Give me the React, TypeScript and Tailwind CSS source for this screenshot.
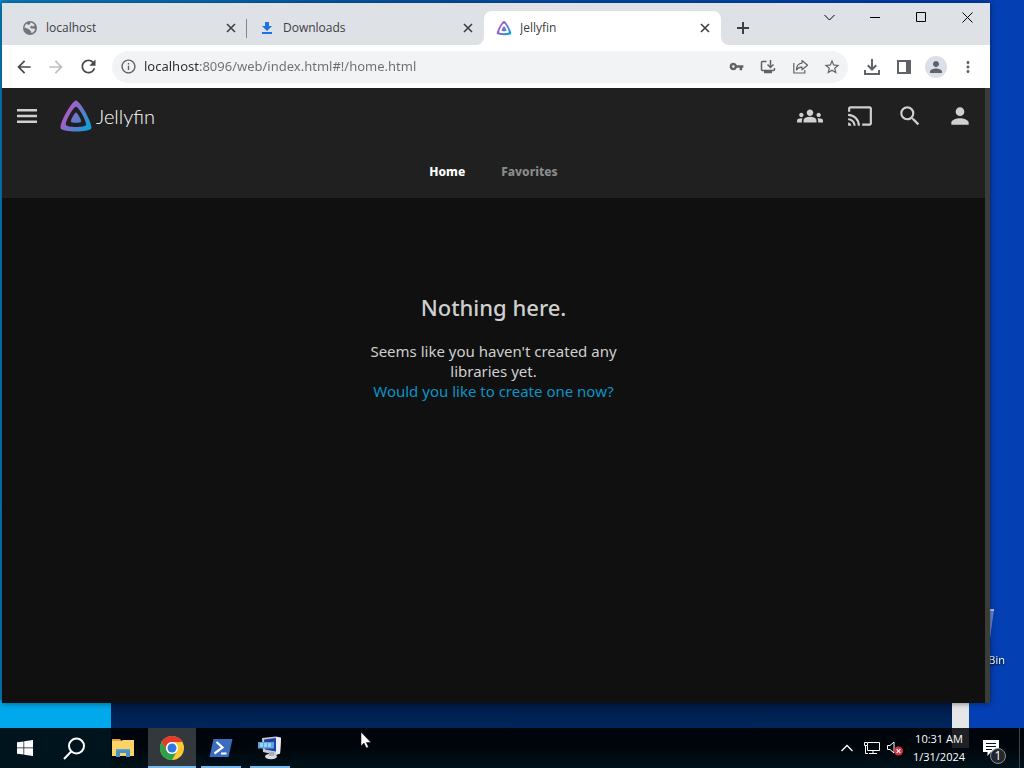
import React, { useState } from "react";
import {
  MdArrowBack,
  MdArrowForward,
  MdCast,
  MdGroups,
  MdInfoOutline,
  MdMoreVert,
  MdPerson,
  MdRefresh,
  MdSearch,
  MdStarBorder,
  MdVpnKey,
} from "react-icons/md";

interface BrowserTab {
  id: string;
  title: string;
  icon: React.ReactNode;
}

interface IconButtonProps {
  label: string;
  className?: string;
  children: React.ReactNode;
}

const IconButton: React.FC<IconButtonProps> = ({
  label,
  className = "w-8 h-8",
  children,
}) => (
  <button
    type="button"
    aria-label={label}
    className={`flex shrink-0 items-center justify-center ${className}`}
  >
    {children}
  </button>
);

/**
 * Jellyfin triangle, used in the tab and in the page header
 */
const JellyfinMark: React.FC<{ id: string; size: number }> = ({ id, size }) => (
  <svg width={size} height={size} viewBox="0 0 512 512" aria-hidden="true">
    <defs>
      <linearGradient
        id={id}
        gradientUnits="userSpaceOnUse"
        x1="110"
        y1="213"
        x2="497"
        y2="437"
      >
        <stop offset="0" stopColor="#aa5cc3" />
        <stop offset="1" stopColor="#00a4dc" />
      </linearGradient>
    </defs>
    <path
      fill={`url(#${id})`}
      d="M256,201.6c-20.4,0-86.2,119.3-76.2,139.4s142.5,19.9,152.4,0S276.5,201.6,256,201.6z"
    />
    <path
      fill={`url(#${id})`}
      fillRule="evenodd"
      d="M256,23.3c-61.6,0-259.8,359.4-229.6,420.1s429.2,60,459.1,0S317.6,23.3,256,23.3z M406.5,390.8c-19.6,39.3-281.1,39.8-300.9,0s110.1-275.3,150.4-275.3S426.1,351.4,406.5,390.8z"
    />
  </svg>
);

const GlobeMark = () => (
  <svg width="14" height="14" viewBox="0 0 14 14" aria-hidden="true">
    <circle cx="7" cy="7" r="7" fill="#737679" />
    <path
      d="M7.500 1.500c1.800.3 3.300 1.300 4.200 2.800L10 5.500 8.300 4.700 6.800 6.300l1.700 1.200 3.700.3c-.3 2-1.700 3.700-3.700 4.300l-.7-2.200L5.500 8 1.500 6.600C1.700 5 2.500 3.600 3.800 2.600L5 4l2-.8z"
      fill="#dee1e6"
    />
  </svg>
);

const DownloadsMark = () => (
  <svg width="16" height="16" viewBox="0 0 16 16" fill="#1a73e8" aria-hidden="true">
    <path d="M6 2h4v4h3l-5 5-5-5h3z" />
    <path d="M3 12h10v2H3z" />
  </svg>
);

const tabs: BrowserTab[] = [
  { id: "localhost", title: "localhost", icon: <GlobeMark /> },
  { id: "downloads", title: "Downloads", icon: <DownloadsMark /> },
  {
    id: "jellyfin",
    title: "Jellyfin",
    icon: <JellyfinMark id="mark-tab" size={16} />,
  },
];

const TabStrip = () => {
  const [active, setActive] = useState("jellyfin");

  return (
    <div className="flex h-[42px] shrink-0 bg-[#dee1e6] pl-2 text-[#3c4043]">
      <div className="flex min-w-0 flex-1 items-end">
        {tabs.map((tab, index) => {
          const isActive = tab.id === active;
          return (
            <div
              key={tab.id}
              className={`relative flex h-[34px] w-[237px] min-w-0 items-center gap-2 pl-3 pr-2 ${
                isActive ? "rounded-t-lg bg-white" : ""
              }`}
            >
              <button
                type="button"
                onClick={() => setActive(tab.id)}
                className="flex min-w-0 flex-1 items-center gap-2 text-left text-xs"
              >
                <span className="flex w-4 shrink-0 justify-center">{tab.icon}</span>
                <span className="truncate">{tab.title}</span>
              </button>
              <IconButton label={`Close ${tab.title}`} className="size-4">
                <svg width="10" height="10" viewBox="0 0 10 10" stroke="currentColor" strokeWidth="1.600">
                  <path d="M1 1l8 8M9 1L1 9" />
                </svg>
              </IconButton>
              {index === 0 && !isActive && (
                <span className="absolute right-0 top-2 h-[19px] w-px bg-[#80868b]" />
              )}
              {isActive && (
                <>
                  <svg
                    className="absolute -left-2 bottom-0"
                    width="8"
                    height="8"
                    viewBox="0 0 8 8"
                  >
                    <path d="M8 0v8H0a8 8 0 0 0 8-8z" fill="#fff" />
                  </svg>
                  <svg
                    className="absolute -right-2 bottom-0"
                    width="8"
                    height="8"
                    viewBox="0 0 8 8"
                  >
                    <path d="M0 0v8h8a8 8 0 0 1-8-8z" fill="#fff" />
                  </svg>
                </>
              )}
            </div>
          );
        })}
        <IconButton label="New tab" className="ml-2 h-[34px] w-7">
          <svg width="12" height="12" viewBox="0 0 12 12" stroke="currentColor" strokeWidth="2">
            <path d="M6 0v12M0 6h12" />
          </svg>
        </IconButton>
      </div>

      {/* Window controls */}
      <div className="flex shrink-0 text-black">
        <IconButton label="Search tabs" className="h-7 w-[46px]">
          <svg width="11" height="11" viewBox="0 0 11 11" fill="none" stroke="currentColor">
            <path d="M0.500 3l5 5 5-5" />
          </svg>
        </IconButton>
        <IconButton label="Minimize" className="h-7 w-[46px]">
          <svg width="10" height="10" viewBox="0 0 10 10" stroke="currentColor">
            <path d="M0 5.500h10" />
          </svg>
        </IconButton>
        <IconButton label="Maximize" className="h-7 w-[46px]">
          <svg width="10" height="10" viewBox="0 0 10 10" fill="none" stroke="currentColor">
            <path d="M0.500 0.500h9v9h-9z" />
          </svg>
        </IconButton>
        <IconButton label="Close" className="h-7 w-[46px]">
          <svg width="11" height="11" viewBox="0 0 11 11" stroke="currentColor">
            <path d="M0.500 0.500l10 10M10.500 0.500l-10 10" />
          </svg>
        </IconButton>
      </div>
    </div>
  );
};

const Toolbar = () => (
  <div className="flex h-[43px] shrink-0 items-center bg-white px-1.5 text-[#5f6368]">
    <IconButton label="Back">
      <MdArrowBack size={20} className="text-[#46494d]" />
    </IconButton>
    <IconButton label="Forward">
      <MdArrowForward size={20} className="text-[#bdbec1]" />
    </IconButton>
    <IconButton label="Reload">
      <MdRefresh size={21} className="text-[#46494d]" />
    </IconButton>

    <div className="mx-2 flex h-8 min-w-0 flex-1 items-center rounded-full bg-[#f1f3f4]">
      <IconButton label="View site information">
        <MdInfoOutline size={17} />
      </IconButton>
      {/* Host is darker than the rest of the address */}
      <input
        type="text"
        aria-label="Address"
        defaultValue="localhost:8096/web/index.html#!/home.html"
        className="h-8 min-w-0 flex-1 bg-[linear-gradient(to_right,#2b2d30_56px,#6a6e72_56px)] bg-clip-text pb-0.5 font-['Noto_Sans','Open_Sans',sans-serif] text-[13px] text-transparent caret-black outline-none"
      />
      <IconButton label="Passwords">
        <MdVpnKey size={15} />
      </IconButton>
      <IconButton label="Install app">
        <svg width="16" height="16" viewBox="0 0 16 16" fill="none" stroke="currentColor" strokeWidth="1.500">
          <path d="M6.500 2.500H2.500a1 1 0 0 0-1 1V10.500a1 1 0 0 0 1 1h11a1 1 0 0 0 1-1V9" />
          <path d="M10.500 1v7.500M7.500 5.500l3 3 3-3" />
          <path d="M4 13h8" strokeWidth="2.500" />
        </svg>
      </IconButton>
      <IconButton label="Share">
        <svg width="17" height="17" viewBox="0 0 17 17" fill="none" stroke="currentColor" strokeWidth="1.200">
          <path d="M1.800 5v10h11v-3" />
          <path d="M10 2.500l5.500 4.700-5.500 4.600V9.200C7.500 9 5.800 10 4.500 12c0-4 2.200-6.600 5.500-6.900z" strokeLinejoin="round" />
        </svg>
      </IconButton>
      <IconButton label="Bookmark this tab">
        <MdStarBorder size={18} />
      </IconButton>
    </div>

    <IconButton label="Downloads">
      <svg width="18" height="18" viewBox="0 0 18 18" fill="none" stroke="currentColor" strokeWidth="2">
        <path d="M9 1v10.500M4.800 7.300L9 11.500l4.200-4.200" />
        <path d="M2 12v4h14v-4" />
      </svg>
    </IconButton>
    <IconButton label="Side panel">
      <svg width="14" height="14" viewBox="0 0 14 14" fill="none" stroke="currentColor" strokeWidth="2">
        <path d="M1 1h12v12H1z" />
        <path d="M10 1h3v12h-3z" fill="currentColor" />
      </svg>
    </IconButton>
    <IconButton label="Profile">
      <span className="flex size-[22px] items-center justify-center rounded-full bg-[#dadfe8]">
        <MdPerson size={18} />
      </span>
    </IconButton>
    <IconButton label="Menu">
      <MdMoreVert size={18} />
    </IconButton>
  </div>
);

const JellyfinPage = () => {
  const [section, setSection] = useState("Home");

  return (
    <main className="flex min-h-0 flex-1 bg-[#101010] font-['Noto_Sans','Open_Sans',sans-serif]">
      <div className="flex min-w-0 flex-1 flex-col">
        <header className="bg-[#202020] text-[#d0d0d0]">
          <div className="flex h-14 items-center">
            <IconButton label="Menu" className="h-12 w-[50px]">
              <svg width="20" height="14" viewBox="0 0 20 14" fill="currentColor">
                <path d="M0 0h20v2.500H0zM0 5.700h20v2.600H0zM0 11.500h20V14H0z" />
              </svg>
            </IconButton>
            <a href="#home" className="ml-[7px] flex items-center gap-[3px] text-white">
              <JellyfinMark id="mark-header" size={34} />
              <span className="font-['Lato',sans-serif] text-[20px] font-light leading-8">
                Jellyfin
              </span>
            </a>
            <div className="ml-auto flex">
              <IconButton label="SyncPlay" className="h-12 w-[50px]">
                <MdGroups size={26} />
              </IconButton>
              <IconButton label="Cast" className="h-12 w-[50px]">
                <MdCast size={26} />
              </IconButton>
              <IconButton label="Search" className="h-12 w-[50px]">
                <MdSearch size={26} />
              </IconButton>
              <IconButton label="User" className="h-12 w-[50px]">
                <MdPerson size={26} />
              </IconButton>
            </div>
          </div>
          <nav className="flex h-[54px] items-center justify-center gap-9 pt-0.5">
            {["Home", "Favorites"].map((name) => (
              <button
                key={name}
                type="button"
                onClick={() => setSection(name)}
                className={`text-xs font-extrabold ${
                  section === name ? "text-white" : "text-[#8b8b8b]"
                }`}
              >
                {name}
              </button>
            ))}
          </nav>
        </header>

        {/* Empty library message */}
        <section className="mx-auto w-[280px] pt-[93px] text-center text-[15px] leading-5 text-[#cfcfcf]">
          <h1 className="mb-[18px] text-[22px] font-medium leading-8">Nothing here.</h1>
          <p>Seems like you haven't created any libraries yet.</p>
          <a href="#libraries" className="text-[#0a94c6]">
            Would you like to create one now?
          </a>
        </section>
      </div>
      <div className="w-[5px] shrink-0 bg-[#3a3d35]" />
    </main>
  );
};

const WindowsIcon = () => (
  <svg width="16" height="16" viewBox="0 0 16 16" fill="#fff">
    <path d="M0 2.300l6.500-.9v6.200H0zM7.200 1.300L16 0v7.600H7.200zM0 8.300h6.500v6.300L0 13.700zM7.200 8.300H16V16l-8.800-1.300z" />
  </svg>
);

const TaskSearchIcon = () => (
  <svg width="23" height="23" viewBox="0 0 23 23" fill="none" stroke="#fff" strokeWidth="2">
    <circle cx="13.500" cy="9" r="7.500" />
    <path d="M8.200 14.500L1 22" />
  </svg>
);

const ExplorerIcon = () => (
  <svg width="22" height="20" viewBox="0 0 22 20">
    <path d="M0 1h8l2 3H0z" fill="#e0a52d" />
    <path d="M0 3h9l2-1h11v16H0z" fill="#fbd368" />
    <path d="M4 19v-8h14v8h-4v-4H8v4z" fill="#4593c6" />
    <path d="M4 11h14v1.500H4z" fill="#5aa5d2" />
  </svg>
);

const ChromeIcon = () => (
  <svg width="24" height="24" viewBox="0 0 48 48">
    <circle cx="24" cy="24" r="24" fill="#fcc934" />
    <path d="M3.200 12A24 24 0 0 1 44.800 12H24A12 12 0 0 0 13.600 30z" fill="#e33b2e" />
    <path d="M3.200 12l10.400 18A12 12 0 0 0 34.400 30L24 48A24 24 0 0 1 3.200 12z" fill="#2ba24c" />
    <circle cx="24" cy="24" r="12" fill="#fff" />
    <circle cx="24" cy="24" r="9" fill="#2f78e4" />
  </svg>
);

const PowerShellIcon = () => (
  <svg width="24" height="20" viewBox="0 0 24 20">
    <path d="M4.500 1H23.500L19.500 19H.5z" fill="#3b6cc0" />
    <path d="M7.500 4l6 5.500-8 6" fill="none" stroke="#fff" strokeWidth="2.200" />
    <path d="M12 15.500h5.500" stroke="#fff" strokeWidth="2" />
  </svg>
);

const RemoteIcon = () => (
  <svg width="24" height="24" viewBox="0 0 24 24">
    <path d="M4 2l14-1.500 5 1-1 16-4 1.500-13-3z" fill="#c5cad3" />
    <path d="M6 3.500l12-1.500v13.500L7 13.500z" fill="#1d3fa6" />
    <path d="M18 1l5 1-1 15.500-4 1z" fill="#eceef1" />
    <ellipse cx="13" cy="20.500" rx="6" ry="2.800" fill="#d9dce0" />
    <path d="M11 16h5v4h-5z" fill="#aab0b8" />
    <path d="M0 6h16v6.500H0z" fill="#5aa5dc" />
    <path d="M2 8h12M2 10h12" stroke="#e4f3fd" strokeDasharray="3 1" />
  </svg>
);

interface TaskItem {
  label: string;
  icon: React.ReactNode;
  state: "idle" | "open" | "focused";
}

const taskItems: TaskItem[] = [
  { label: "Start", icon: <WindowsIcon />, state: "idle" },
  { label: "Search", icon: <TaskSearchIcon />, state: "idle" },
  { label: "File Explorer", icon: <ExplorerIcon />, state: "idle" },
  { label: "Google Chrome", icon: <ChromeIcon />, state: "focused" },
  { label: "Windows PowerShell", icon: <PowerShellIcon />, state: "open" },
  { label: "Server Manager", icon: <RemoteIcon />, state: "open" },
];

const Taskbar = () => (
  <footer className="relative flex h-10 shrink-0 items-stretch bg-linear-to-b from-[#00040c] via-[#00060c] to-[#00121a] text-white">
    {/* Wallpaper showing through the bar */}
    <span className="absolute inset-y-0 left-0 w-[111px] bg-[#00141d]" />
    <span className="absolute right-[55px] top-0 h-5 w-[17px] bg-[#1f2224]" />

    <div className="relative flex gap-px pl-px">
      {taskItems.map((item) => (
        <button
          key={item.label}
          type="button"
          aria-label={item.label}
          className={`relative flex w-12 items-center justify-center ${
            item.state === "focused" ? "bg-[#33383c]" : ""
          }`}
        >
          {item.icon}
          {item.state !== "idle" && (
            <span
              className={`absolute bottom-0 h-0.5 bg-[#76b9ed] ${
                item.state === "focused" ? "inset-x-0" : "inset-x-1"
              }`}
            />
          )}
        </button>
      ))}
    </div>

    {/* System tray */}
    <div className="relative ml-auto flex items-center">
      <IconButton label="Show hidden icons" className="h-10 w-6">
        <svg width="12" height="8" viewBox="0 0 12 8" fill="none" stroke="#fff" strokeWidth="1.300">
          <path d="M0.500 7L6 1.500 11.500 7" />
        </svg>
      </IconButton>
      <IconButton label="Network" className="h-10 w-6">
        <svg width="17" height="14" viewBox="0 0 17 14" fill="none" stroke="#fff">
          <path d="M5 1.500h11.500v8H4.500V5M10 9.500v3M6 12.500h8" />
          <path d="M1.500 1.500h3v3h-3zM2.500 4.500v8H5" />
        </svg>
      </IconButton>
      <IconButton label="Volume muted" className="mr-[3px] h-10 w-6">
        <svg width="18" height="16" viewBox="0 0 18 16" fill="none">
          <path d="M1.500 5.500H4l4-3.500v11L4 9.500H1.500z" stroke="#fff" />
          <circle cx="12.500" cy="11" r="4.500" fill="#d5303f" />
          <path d="M10.700 9.200l3.600 3.600M14.300 9.200l-3.600 3.600" stroke="#fff" strokeWidth="1.200" />
        </svg>
      </IconButton>
      <button
        type="button"
        className="flex w-[58px] flex-col items-center whitespace-nowrap text-[11px] leading-[18px]"
      >
        <span>10:31 AM</span>
        <span>1/31/2024</span>
      </button>
      <IconButton label="Notifications" className="relative h-10 w-[46px]">
        <svg width="16" height="16" viewBox="0 0 16 16">
          <path d="M0 0h16v12H8l-3.500 4v-4H0z" fill="#fff" />
          <path d="M3 3.500h10M3 6.500h10M3 9.500h6" stroke="#06101c" />
        </svg>
        <span className="absolute bottom-1 right-2 flex size-4 items-center justify-center rounded-full border border-[#8b8f96] bg-[#23272f] text-xs leading-none">
          1
        </span>
      </IconButton>
      <span className="ml-[5px] h-10 w-[5px] border-l border-[#3b4450]" />
    </div>
  </footer>
);

const App = () => (
  <div className="flex h-screen flex-col overflow-hidden bg-[#0440b0] font-['Open_Sans','Noto_Sans',sans-serif]">
    <div className="relative flex min-h-0 flex-1 flex-col bg-linear-to-r from-[#0a84c8] via-[#0558a8] via-40% to-[#0440b4] to-90%">
      {/* Wallpaper strip below the window */}
      <div className="mt-auto flex h-7">
        <div className="w-[111px] bg-[#00a9ec]" />
        <div className="flex-1 bg-linear-to-b from-[#001a45] to-[#00265c]" />
        <div className="w-[17px] bg-[#e6e6e8]" />
        <div className="w-[55px] bg-[#0440b4]" />
      </div>

      {/* Recycle bin, mostly covered by the window */}
      <div className="absolute bottom-[60px] right-[19px] flex flex-col items-start gap-2.5 text-white">
        <svg width="8" height="34" viewBox="0 0 8 34">
          <path d="M2 2l4-1-4 30H1z" fill="#6d8ad0" />
          <path d="M2 1h4v2H2z" fill="#b9c7ea" />
        </svg>
        <span className="text-[11px] leading-4 drop-shadow-[0_1px_1px_#000]">Bin</span>
      </div>

      <div className="absolute bottom-[25px] left-0.5 right-[34px] top-[3px] flex flex-col shadow-[0_0_6px_#0008]">
        <TabStrip />
        <Toolbar />
        <JellyfinPage />
      </div>
    </div>
    <Taskbar />

    {/* Mouse pointer */}
    <svg
      className="pointer-events-none absolute left-[360px] top-[731px]"
      width="12"
      height="18"
      viewBox="0 0 12 18"
    >
      <path d="M1 1v14l3-3 2.300 5 2.200-1-2.200-4.500H11z" fill="#fff" stroke="#000" strokeWidth="0.500" />
    </svg>
  </div>
);

export default App;
